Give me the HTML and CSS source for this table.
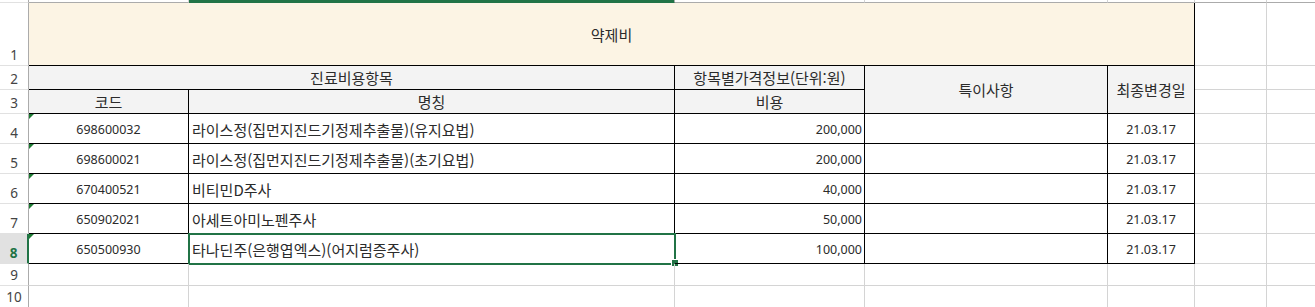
FILE: index.html
```html
<!DOCTYPE html>
<html lang="ko">
<head>
<meta charset="utf-8">
<title>약제비</title>
<link rel="stylesheet" href="styles.css">
</head>
<body>
<div class="sheet">
  <!-- column header strip -->
  <div class="strip corner"></div>
  <div class="strip"></div>
  <div class="strip active"></div>
  <div class="strip"></div>
  <div class="strip"></div>
  <div class="strip"></div>
  <div class="strip"></div>
  <div class="strip last"></div>

  <!-- row 1 -->
  <div class="rh">1</div>
  <div class="c blk cream ctr span5 title">약제비</div>
  <div class="c"></div>
  <div class="c last"></div>

  <!-- row 2 -->
  <div class="rh">2</div>
  <div class="c blk gray ctr span2">진료비용항목</div>
  <div class="c blk gray ctr">항목별가격정보(단위:원)</div>
  <div class="c blk gray ctr rows2">특이사항</div>
  <div class="c blk gray ctr rows2">최종변경일</div>
  <div class="c"></div>
  <div class="c last"></div>

  <!-- row 3 -->
  <div class="rh">3</div>
  <div class="c blk gray ctr">코드</div>
  <div class="c blk gray ctr">명칭</div>
  <div class="c blk gray ctr">비용</div>
  <div class="c"></div>
  <div class="c last"></div>

  <!-- row 4 -->
  <div class="rh">4</div>
  <div class="c blk ctr num tri">698600032</div>
  <div class="c blk lt name">라이스정(집먼지진드기정제추출물)(유지요법)</div>
  <div class="c blk rt num">200,000</div>
  <div class="c blk"></div>
  <div class="c blk ctr num">21.03.17</div>
  <div class="c"></div>
  <div class="c last"></div>

  <!-- row 5 -->
  <div class="rh">5</div>
  <div class="c blk ctr num tri">698600021</div>
  <div class="c blk lt name">라이스정(집먼지진드기정제추출물)(초기요법)</div>
  <div class="c blk rt num">200,000</div>
  <div class="c blk"></div>
  <div class="c blk ctr num">21.03.17</div>
  <div class="c"></div>
  <div class="c last"></div>

  <!-- row 6 -->
  <div class="rh">6</div>
  <div class="c blk ctr num tri">670400521</div>
  <div class="c blk lt name">비티민D주사</div>
  <div class="c blk rt num">40,000</div>
  <div class="c blk"></div>
  <div class="c blk ctr num">21.03.17</div>
  <div class="c"></div>
  <div class="c last"></div>

  <!-- row 7 -->
  <div class="rh">7</div>
  <div class="c blk ctr num tri">650902021</div>
  <div class="c blk lt name">아세트아미노펜주사</div>
  <div class="c blk rt num">50,000</div>
  <div class="c blk"></div>
  <div class="c blk ctr num">21.03.17</div>
  <div class="c"></div>
  <div class="c last"></div>

  <!-- row 8 -->
  <div class="rh rh-active">8</div>
  <div class="c blk ctr num tri">650500930</div>
  <div class="c blk lt name selected">타나딘주(은행엽엑스)(어지럼증주사)<span class="sel-box"></span><span class="sel-handle"></span></div>
  <div class="c blk rt num">100,000</div>
  <div class="c blk"></div>
  <div class="c blk ctr num">21.03.17</div>
  <div class="c"></div>
  <div class="c last"></div>

  <!-- row 9 -->
  <div class="rh">9</div>
  <div class="c"></div>
  <div class="c"></div>
  <div class="c"></div>
  <div class="c"></div>
  <div class="c"></div>
  <div class="c"></div>
  <div class="c last"></div>

  <!-- row 10 -->
  <div class="rh">10</div>
  <div class="c"></div>
  <div class="c"></div>
  <div class="c"></div>
  <div class="c"></div>
  <div class="c"></div>
  <div class="c"></div>
  <div class="c last"></div>
</div>
</body>
</html>
```

FILE: styles.css
```css
html, body {
  margin: 0;
  padding: 0;
  background: #ffffff;
  overflow: hidden;
}

body {
  width: 1315px;
  height: 307px;
  font-family: "Noto Sans CJK KR", "Noto Sans", sans-serif;
  color: #2b2b2b;
}

.sheet {
  display: grid;
  grid-template-columns: 29px 160px 486px 190px 243px 87px 72px 1fr;
  grid-template-rows: 3px 63px 24px 24px 30px 30px 30px 30px 30px 22px 22px;
}

/* column header strip */
.strip {
  box-sizing: border-box;
  border-right: 1px solid #d4d4d4;
  border-bottom: 1px solid #ababab;
  background: #ffffff;
}
.strip.corner {
  border-bottom-color: #e1e1e1;
  border-right-color: #ababab;
}
.strip.active {
  background: #217346;
  border-bottom-color: #217346;
  border-right-color: #ababab;
}
.strip.last {
  border-right: none;
}

/* row headers */
.rh {
  box-sizing: border-box;
  border-right: 1px solid #ababab;
  border-bottom: 1px solid #e1e1e1;
  background: #ffffff;
  display: flex;
  justify-content: center;
  align-items: flex-end;
  padding-bottom: 2px;
  font-family: "Noto Sans", "Open Sans", sans-serif;
  font-size: 13.5px;
  line-height: 16px;
  color: #444444;
}
.rh-active {
  background: #e1e1e1;
  color: #217346;
  font-weight: bold;
  border-right: 2px solid #217346;
}

/* cells */
.c {
  box-sizing: border-box;
  border-right: 1px solid #d4d4d4;
  border-bottom: 1px solid #d4d4d4;
  position: relative;
  display: flex;
  align-items: center;
  white-space: nowrap;
  font-size: 15px;
  line-height: 18px;
}
.c.last {
  border-right: none;
}
.c.blk {
  border-right-color: #000000;
  border-bottom-color: #000000;
}
.cream {
  background: #fcf4e4;
}
.gray {
  background: #f3f3f3;
}
.ctr {
  justify-content: center;
}
.lt {
  justify-content: flex-start;
  padding-left: 3px;
}
.rt {
  justify-content: flex-end;
  padding-right: 2px;
}
.span5 {
  grid-column: span 5;
}
.span2 {
  grid-column: span 2;
}
.rows2 {
  grid-row: span 2;
}
.title {
  padding-top: 1px;
}
.name {
  padding-top: 3px;
}
.num {
  font-family: "Noto Sans", "Open Sans", sans-serif;
  font-size: 12.5px;
  padding-top: 3px;
}

/* green "number stored as text" marker */
.tri::before {
  content: "";
  position: absolute;
  top: 0;
  left: 0;
  width: 0;
  height: 0;
  border-top: 5px solid #1e7b34;
  border-right: 5px solid transparent;
}

/* active cell selection */
.sel-box {
  position: absolute;
  top: -1px;
  left: -1px;
  right: -2px;
  bottom: -2px;
  border: 2px solid #217346;
  box-sizing: border-box;
  pointer-events: none;
}
.sel-handle {
  position: absolute;
  right: -4px;
  bottom: -3px;
  width: 6px;
  height: 6px;
  background: #217346;
  box-shadow: 0 0 0 1px #ffffff;
}
```
